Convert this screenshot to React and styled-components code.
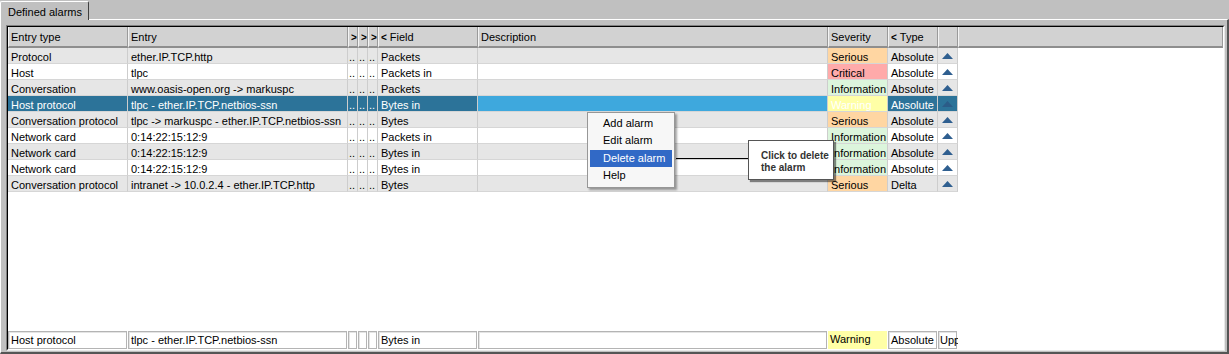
import styled, { createGlobalStyle } from "styled-components";

const COLS = "120px 220px 10px 10px 10px 100px 350px 60px 50px 20px 1fr";

const severityBg = {
  Serious: "#ffd6a2",
  Critical: "#ffaaaa",
  Information: "#dcf5dc",
  Warning: "#ffffa6",
};

const rows = [
  { type: "Protocol", entry: "ether.IP.TCP.http", field: "Packets", sev: "Serious", kind: "Absolute" },
  { type: "Host", entry: "tlpc", field: "Packets in", sev: "Critical", kind: "Absolute" },
  { type: "Conversation", entry: "www.oasis-open.org -> markuspc", field: "Packets", sev: "Information", kind: "Absolute" },
  { type: "Host protocol", entry: "tlpc - ether.IP.TCP.netbios-ssn", field: "Bytes in", sev: "Warning", kind: "Absolute", selected: true },
  { type: "Conversation protocol", entry: "tlpc -> markuspc - ether.IP.TCP.netbios-ssn", field: "Bytes", sev: "Serious", kind: "Absolute" },
  { type: "Network card", entry: "0:14:22:15:12:9", field: "Packets in", sev: "Information", kind: "Absolute" },
  { type: "Network card", entry: "0:14:22:15:12:9", field: "Bytes in", sev: "Information", kind: "Absolute" },
  { type: "Network card", entry: "0:14:22:15:12:9", field: "Bytes in", sev: "Information", kind: "Absolute" },
  { type: "Conversation protocol", entry: "intranet -> 10.0.2.4 - ether.IP.TCP.http", field: "Bytes", sev: "Serious", kind: "Delta" },
];

const Global = createGlobalStyle`
  html, body { margin: 0; padding: 0; }
  body {
    background: #c0c0c0;
    font-family: "Liberation Sans", Arial, sans-serif;
    font-size: 11px;
    color: #000;
  }
`;

const Window = styled.div`
  width: 1229px;
  height: 354px;
  display: flex;
  flex-direction: column;
  background: #c0c0c0;
  overflow: hidden;
`;

const TabBar = styled.div`
  height: 19px;
  display: flex;
  align-items: flex-end;
`;

const Tab = styled.div`
  position: relative;
  z-index: 1;
  width: 89px;
  height: 19px;
  margin-bottom: -1px;
  box-sizing: border-box;
  padding: 3px 0 0 7px;
  background: #c0c0c0;
  border-top: 1px solid #fff;
  border-left: 1px solid #fff;
  border-right: 1px solid #404040;
  border-radius: 2px 2px 0 0;
  line-height: 14px;
`;

const Panel = styled.div`
  flex: 1;
  display: flex;
  min-height: 0;
  border-top: 1px solid #fff;
  border-left: 1px solid #fff;
  border-right: 2px solid #555;
  border-bottom: 2px solid #555;
  padding: 5px 2px 1px 5px;
`;

const Sunken = styled.div`
  flex: 1;
  display: flex;
  border-top: 1px solid #808080;
  border-left: 1px solid #808080;
  border-right: 1px solid #e8e8e8;
  border-bottom: 1px solid #e8e8e8;
`;

const Sheet = styled.div`
  position: relative;
  flex: 1;
  display: flex;
  flex-direction: column;
  background: #fff;
  border-top: 1px solid #000;
  border-left: 1px solid #000;
  border-right: 1px solid #fff;
  border-bottom: 1px solid #fff;
`;

const Row = styled.div`
  display: grid;
  grid-template-columns: ${COLS};
  height: ${(p) => p.$h}px;
  flex-shrink: 0;
`;

const Head = styled.div`
  box-sizing: border-box;
  background: #d2d2d2;
  border-left: 1px solid #f4f4f4;
  border-right: 1px solid #9a9a9a;
  border-bottom: 2px solid #8e8e8e;
  padding: 1px 0 0 2px;
  line-height: 18px;
  white-space: nowrap;
  overflow: hidden;
  b {
    font-size: 10px;
    margin-right: 3px;
  }
`;

const Cell = styled.div`
  box-sizing: border-box;
  background: ${(p) => p.$bg};
  color: ${(p) => (p.$sel ? "#fff" : "#000")};
  border-right: 1px solid #cdcdcd;
  border-bottom: 1px solid #d6d6d6;
  padding: 1px 0 0 ${(p) => (p.$tight ? 1 : 3)}px;
  line-height: 16px;
  white-space: nowrap;
  overflow: hidden;
`;

const ArrowCell = styled(Cell)`
  display: flex;
  align-items: center;
  justify-content: center;
  padding: 1px 0 0 0;
`;

const Filler = styled.div`
  background: #fff;
`;

const Spacer = styled.div`
  flex: 1;
`;

const EditCell = styled.div`
  box-sizing: border-box;
  background: ${(p) => p.$bg || "#fff"};
  border: ${(p) => (p.$flat ? "none" : "1px solid #b4b4b4")};
  box-shadow: ${(p) => (p.$flat ? "none" : "inset 1px 1px 0 #e4e4e4")};
  padding: 1px 0 0 ${(p) => (p.$spill ? 1 : 2)}px;
  margin-right: 1px;
  line-height: 15px;
  white-space: nowrap;
  overflow: ${(p) => (p.$spill ? "visible" : "hidden")};
`;

const Menu = styled.div`
  position: absolute;
  left: 579px;
  top: 85px;
  width: 88px;
  box-sizing: border-box;
  padding: 2px 2px 3px 2px;
  background: #f7f7f7;
  border: 1px solid #979797;
  box-shadow: 2px 2px 2px rgba(0, 0, 0, 0.35);
`;

const MenuItem = styled.div`
  height: 17px;
  line-height: 17px;
  padding-left: 13px;
  background: ${(p) => (p.$active ? "#3169c6" : "transparent")};
  color: ${(p) => (p.$active ? "#fff" : "#000")};
  margin-top: ${(p) => (p.$active ? 1 : 0)}px;
  font-size: 11px;
`;

const Leader = styled.div`
  position: absolute;
  left: 668px;
  top: 131px;
  width: 72px;
  height: 1px;
  background: #000;
`;

const Callout = styled.div`
  position: absolute;
  left: 740px;
  top: 113px;
  width: 86px;
  height: 40px;
  box-sizing: border-box;
  padding: 9px 0 0 12px;
  background: #fff;
  border: 1px solid #555;
  box-shadow: 2px 2px 1px rgba(0, 0, 0, 0.45);
  font-size: 10px;
  font-weight: bold;
  color: #333;
  line-height: 12px;
`;

const Up = ({ color }) => (
  <svg width="11" height="6" viewBox="0 0 11 6">
    <path d="M5.5 0 L11 6 L0 6 Z" fill={color} />
  </svg>
);

export default function App() {
  return (
    <Window>
      <Global />
      <TabBar>
        <Tab>Defined alarms</Tab>
      </TabBar>
      <Panel>
        <Sunken>
          <Sheet>
            <Row $h={21}>
              <Head>Entry type</Head>
              <Head>Entry</Head>
              <Head><b>&gt;</b></Head>
              <Head><b>&gt;</b></Head>
              <Head><b>&gt;</b></Head>
              <Head><b>&lt;</b>Field</Head>
              <Head>Description</Head>
              <Head>Severity</Head>
              <Head><b>&lt;</b>Type</Head>
              <Head />
              <Head />
            </Row>
            {rows.map((r, i) => {
              const base = r.selected ? "#2c7399" : i % 2 === 0 ? "#e6e6e6" : "#fff";
              const sel = !!r.selected;
              return (
                <Row key={i} $h={16}>
                  <Cell $bg={base} $sel={sel}>{r.type}</Cell>
                  <Cell $bg={base} $sel={sel}>{r.entry}</Cell>
                  <Cell $bg={base} $sel={sel} $tight>..</Cell>
                  <Cell $bg={base} $sel={sel} $tight>..</Cell>
                  <Cell $bg={base} $sel={sel} $tight>..</Cell>
                  <Cell $bg={base} $sel={sel}>{r.field}</Cell>
                  <Cell $bg={sel ? "#3ea8dd" : base} $sel={sel} />
                  <Cell $bg={severityBg[r.sev]} $sel={sel}>{r.sev}</Cell>
                  <Cell $bg={base} $sel={sel}>{r.kind}</Cell>
                  <ArrowCell $bg={base}>
                    <Up color={sel ? "#2b5c88" : "#2f5f90"} />
                  </ArrowCell>
                  <Filler />
                </Row>
              );
            })}
            <Spacer />
            <Row $h={18}>
              <EditCell>Host protocol</EditCell>
              <EditCell>tlpc - ether.IP.TCP.netbios-ssn</EditCell>
              <EditCell />
              <EditCell />
              <EditCell />
              <EditCell>Bytes in</EditCell>
              <EditCell />
              <EditCell $bg="#ffffa6" $flat>Warning</EditCell>
              <EditCell>Absolute</EditCell>
              <EditCell $spill>Upp</EditCell>
              <Filler />
            </Row>
            <Menu>
              <MenuItem>Add alarm</MenuItem>
              <MenuItem>Edit alarm</MenuItem>
              <MenuItem $active>Delete alarm</MenuItem>
              <MenuItem>Help</MenuItem>
            </Menu>
            <Leader />
            <Callout>
              Click to delete
              <br />
              the alarm
            </Callout>
          </Sheet>
        </Sunken>
      </Panel>
    </Window>
  );
}
